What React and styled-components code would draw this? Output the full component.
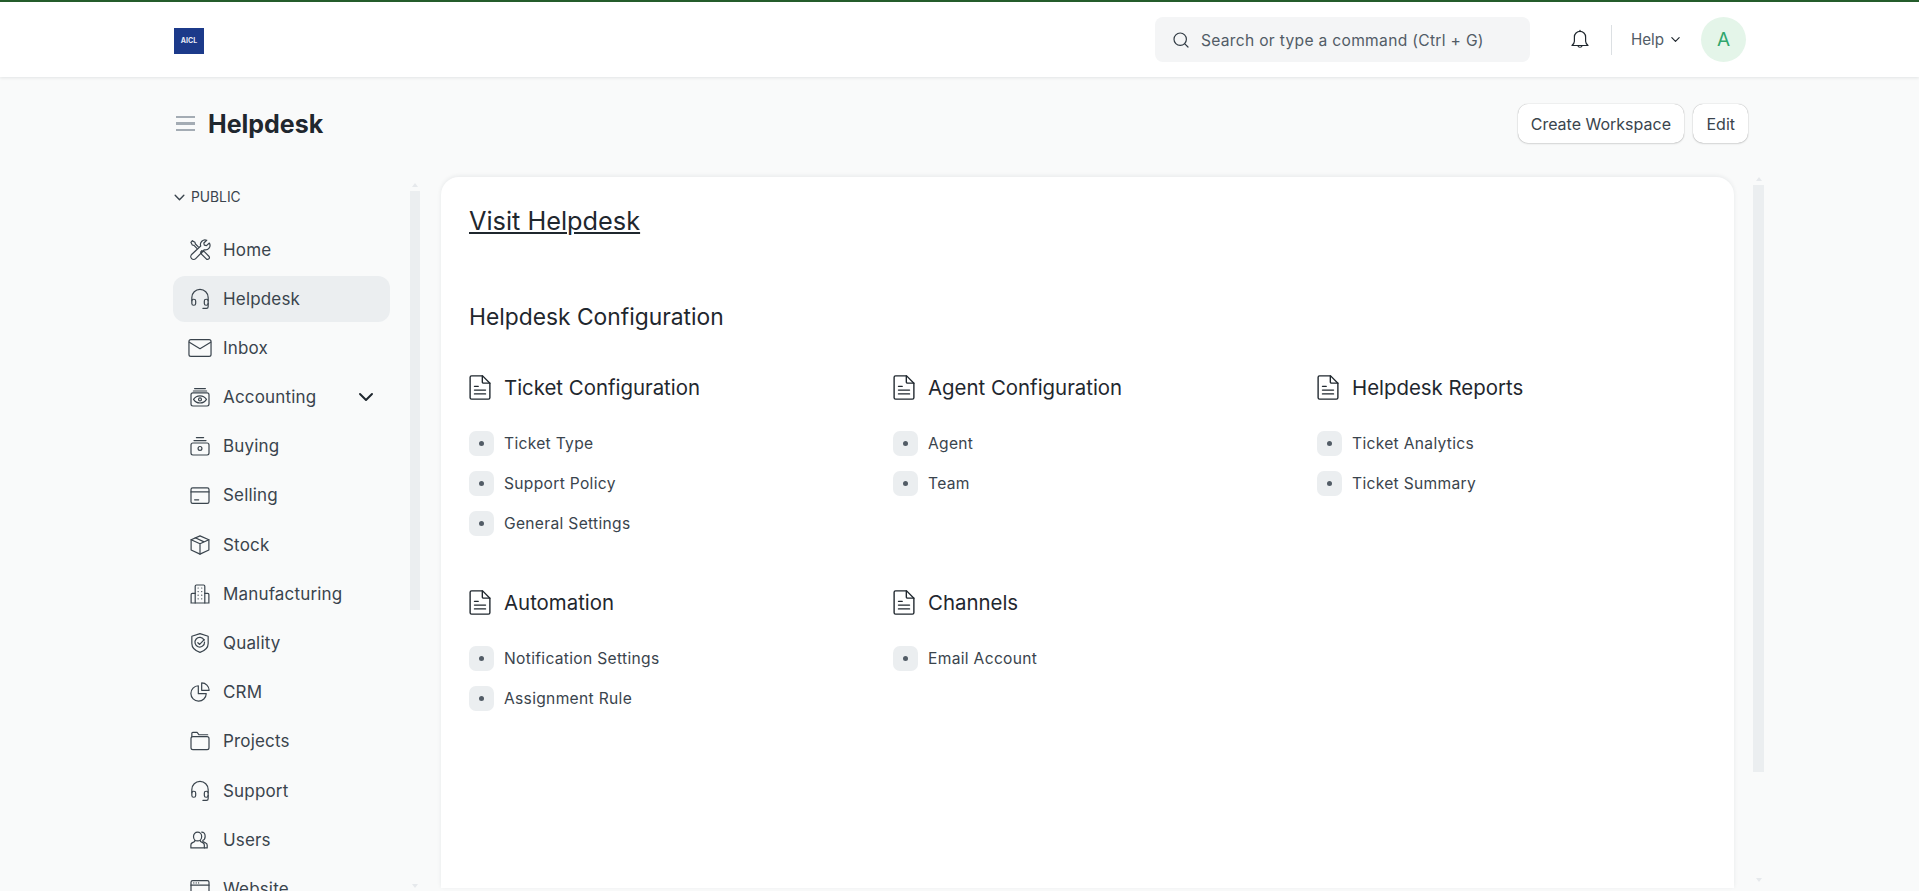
import React from "react";
import styled, { createGlobalStyle } from "styled-components";

const GlobalStyle = createGlobalStyle`
	html, body {
		margin: 0;
		height: 100%;
		overflow: hidden;
		background: #f9fafa;
		font-family: Inter, "Noto Sans", sans-serif;
		color: #1f272e;
	}
	* {
		box-sizing: border-box;
	}
`;

const Line = ({ size = 24, children }) => (
	<svg
		width={size}
		height={size}
		viewBox="0 0 20 20"
		fill="none"
		stroke="currentColor"
		strokeWidth="1"
		strokeLinecap="round"
		strokeLinejoin="round"
	>
		{children}
	</svg>
);

const icons = {
	tool: (
		<>
			<path d="M3.6 2.4 2.4 3.6l1.2 2.2 1.4.4 2.4 2.4" />
			<path d="M3.6 2.4l2.2 1.2.4 1.4 2.4 2.4" />
			<path d="M11.4 10.6l1 1M10.4 11.6l1 1" />
			<path d="M13.6 11.4l4 4a1.6 1.6 0 0 1-2.2 2.2l-4-4a1.5 1.5 0 0 1 2.2-2.2z" />
			<path d="M17.8 4.2 15.4 6.4 13.6 6l-.4-1.8 2.4-2.3a3.8 3.8 0 0 0-5 4.8L3 13.8a2.4 2.4 0 0 0 3.4 3.4l7.2-7.4a3.8 3.8 0 0 0 4.2-5.6z" />
		</>
	),
	headset: (
		<>
			<path d="M3.2 11.4V8.8a6.8 6.8 0 0 1 13.6 0v2.6" />
			<rect x="3.2" y="10.2" width="3.2" height="5" rx="1.5" />
			<rect x="13.6" y="10.2" width="3.2" height="5" rx="1.5" />
			<path d="M16.8 13.6v2.8a1.4 1.4 0 0 1-1.4 1.4h-3" />
		</>
	),
	inbox: (
		<>
			<rect x="0.8" y="3" width="18.4" height="14" rx="1.6" />
			<path d="M1.1 5.2 10 10.6l8.9-5.4" />
		</>
	),
	accounting: (
		<>
			<path d="M5.5 3h9M4.5 5h11" />
			<rect x="2.5" y="6.5" width="15" height="11" rx="1.6" />
			<path d="M4.6 12c1.3-2 3.3-3 5.4-3s4.1 1 5.4 3c-1.3 2-3.3 3-5.4 3s-4.1-1-5.4-3z" />
			<circle cx="10" cy="12" r="1.2" />
		</>
	),
	buying: (
		<>
			<path d="M7 3h6M5 5.5h10" />
			<rect x="2.5" y="7.5" width="15" height="10" rx="1.6" />
			<circle cx="10" cy="12" r="1.6" />
		</>
	),
	selling: (
		<>
			<rect x="2.5" y="4" width="15" height="13" rx="1.4" />
			<path d="M2.5 7.4h15M5.5 14h3.4" />
		</>
	),
	stock: (
		<>
			<path d="M10 2.4 17.4 5.6v8.6L10 17.6 2.6 14.2V5.6z" />
			<path d="M2.6 5.6 10 9l7.4-3.4M10 9v8.6M6 4l7.4 3.4" />
		</>
	),
	building: (
		<>
			<path d="M6 17.5V3.5a1 1 0 0 1 1-1h6a1 1 0 0 1 1 1v14" />
			<path d="M6 9.5H3.6a1 1 0 0 0-1 1v7M14 9.5h2.4a1 1 0 0 1 1 1v7M2.5 17.5h15" />
			<path d="M8.4 5h.1M11.4 5h.1M8.4 8h.1M11.4 8h.1M8.4 11h.1M11.4 11h.1M8.4 14h.1M11.4 14h.1" />
		</>
	),
	quality: (
		<>
			<path d="M10 2.2 16.8 4.4v6c0 3.4-2.6 6-6.8 7.4-4.2-1.4-6.8-4-6.8-7.4v-6z" />
			<path d="M13.4 7.6a4 4 0 1 0 .4 1.6" />
			<path d="M8.2 9.8l1.5 1.4 3.8-4" />
		</>
	),
	crm: (
		<>
			<path d="M8.6 4.8a6.4 6.4 0 1 0 6.6 6.6H8.6z" />
			<path d="M11.4 2.4v6.2h6.2a6.2 6.2 0 0 0-6.2-6.2z" />
		</>
	),
	folder: (
		<>
			<path d="M3.2 6.4V3.6a.8.8 0 0 1 .8-.8h3.6l1.6 2h7.2" />
			<rect x="2.5" y="6.4" width="15" height="10.8" rx="1.6" />
		</>
	),
	users: (
		<>
			<path d="M8 3.4c-1.9 0-3.4 1.5-3.4 3.6S6 10.8 8 10.8 11.4 9 11.4 7 9.9 3.4 8 3.4z" />
			<path d="M5.6 10.4v.8l-2.2 1.2a2 2 0 0 0-1 1.7v2.5h11.2v-2.5a2 2 0 0 0-1-1.7l-2.2-1.2v-.8" />
			<path d="M11.4 3.4c1.6 0 2.9 1.5 2.9 3.4s-.8 3-1.9 3.4v1l2.4 1.3a2 2 0 0 1 1.2 1.8v2.3h-2.2" />
		</>
	),
	website: (
		<>
			<rect x="2.5" y="3" width="15" height="14" rx="1.4" />
			<path d="M2.5 6.8h15M4.8 4.9h.1M6.8 4.9h.1M8.8 4.9h.1" />
		</>
	),
};

const menu = [
	{ label: "Home", icon: "tool" },
	{ label: "Helpdesk", icon: "headset", active: true },
	{ label: "Inbox", icon: "inbox" },
	{ label: "Accounting", icon: "accounting", expandable: true },
	{ label: "Buying", icon: "buying" },
	{ label: "Selling", icon: "selling" },
	{ label: "Stock", icon: "stock" },
	{ label: "Manufacturing", icon: "building" },
	{ label: "Quality", icon: "quality" },
	{ label: "CRM", icon: "crm" },
	{ label: "Projects", icon: "folder" },
	{ label: "Support", icon: "headset" },
	{ label: "Users", icon: "users" },
	{ label: "Website", icon: "website" },
];

const cards = [
	{
		title: "Ticket Configuration",
		links: ["Ticket Type", "Support Policy", "General Settings"],
	},
	{ title: "Agent Configuration", links: ["Agent", "Team"] },
	{ title: "Helpdesk Reports", links: ["Ticket Analytics", "Ticket Summary"] },
	{ title: "Automation", links: ["Notification Settings", "Assignment Rule"] },
	{ title: "Channels", links: ["Email Account"] },
];

const DocIcon = () => (
	<svg width="22" height="25" viewBox="2.6 1.4 14.8 17.2" fill="none" stroke="currentColor" strokeWidth="0.95" strokeLinecap="round" strokeLinejoin="round">
		<path d="M4.2 2h7.6l5 5v10a1 1 0 0 1-1 1H4.2a1 1 0 0 1-1-1V3a1 1 0 0 1 1-1z" />
		<path d="M11.6 2v4.2a.8.8 0 0 0 .8.8h4.4M6.2 9.2h2.6M6.2 11.8h7.6M6.2 14.4h7.6" />
	</svg>
);

const Chevron = ({ size = 12 }) => (
	<svg width={size} height={size} viewBox="0 0 12 12" fill="none" stroke="currentColor" strokeWidth="1.3" strokeLinecap="round" strokeLinejoin="round">
		<path d="M2 4l4 4 4-4" />
	</svg>
);

const App = () => (
	<Page>
		<GlobalStyle />
		<Navbar>
			<Logo>AICL</Logo>
			<NavRight>
				<SearchBox>
					<svg width="18" height="18" viewBox="0 0 18 18" fill="none" stroke="#313b44" strokeWidth="1.2" strokeLinecap="round">
						<circle cx="8.2" cy="8.2" r="6.2" />
						<path d="M12.8 12.8l3.2 3.2" />
					</svg>
					<span>Search or type a command (Ctrl + G)</span>
				</SearchBox>
				<Bell>
					<svg width="24" height="24" viewBox="0 0 24 24" fill="none" stroke="#1f272e" strokeWidth="1.2" strokeLinecap="round" strokeLinejoin="round">
						<path d="M12 3.4a5.6 5.6 0 0 0-5.6 5.6v4.2c0 1.7-1 3-2.4 4.3h16c-1.4-1.3-2.4-2.6-2.4-4.3V9A5.6 5.6 0 0 0 12 3.4z" />
						<path d="M9.8 17.6a2.3 2.3 0 0 0 4.4 0M12 2.4v1" />
					</svg>
				</Bell>
				<NavDivider />
				<Help>
					Help <Chevron size={11} />
				</Help>
				<Avatar>A</Avatar>
			</NavRight>
		</Navbar>

		<PageHead>
			<TitleGroup>
				<Burger>
					<span />
					<span />
					<span />
				</Burger>
				<Title>Helpdesk</Title>
			</TitleGroup>
			<Actions>
				<Button>Create Workspace</Button>
				<Button>Edit</Button>
			</Actions>
		</PageHead>

		<Body>
			<Sidebar>
				<SectionLabel>
					<Chevron size={13} />
					PUBLIC
				</SectionLabel>
				<Menu>
					{menu.map((item) => (
						<MenuItem key={item.label} $active={item.active}>
							<Line>{icons[item.icon]}</Line>
							<span>{item.label}</span>
							{item.expandable && (
								<Expander>
									<Chevron size={18} />
								</Expander>
							)}
						</MenuItem>
					))}
				</Menu>
			</Sidebar>
			<ScrollRail>
				<ArrowUp />
				<Thumb $height={419} />
				<ArrowDown />
			</ScrollRail>

			<Card>
				<VisitLink>Visit Helpdesk</VisitLink>
				<SectionTitle>Helpdesk Configuration</SectionTitle>
				<LinkGrid>
					{cards.map((card) => (
						<LinkCard key={card.title}>
							<CardHead>
								<DocIcon />
								<span>{card.title}</span>
							</CardHead>
							<LinkList>
								{card.links.map((link) => (
									<LinkRow key={link}>
										<Dot />
										<span>{link}</span>
									</LinkRow>
								))}
							</LinkList>
						</LinkCard>
					))}
				</LinkGrid>
			</Card>
			<ScrollRail $main>
				<ArrowUp />
				<Thumb $height={587} />
				<ArrowDown />
			</ScrollRail>
		</Body>
	</Page>
);

export default App;

const Page = styled.div`
	display: flex;
	flex-direction: column;
	height: 100vh;
	overflow: hidden;
`;

const Navbar = styled.header`
	display: flex;
	flex: none;
	align-items: center;
	justify-content: space-between;
	height: 77px;
	padding: 0 173px 0 174px;
	background: #fff;
	border-top: 2px solid #245c2b;
	box-shadow: 0 1px 3px rgba(25, 39, 52, 0.1);
`;

const Logo = styled.div`
	display: flex;
	align-items: center;
	justify-content: center;
	width: 30px;
	height: 26px;
	margin-top: 3px;
	padding-bottom: 2px;
	background: #1c3a8a;
	color: #e8ecf6;
	font-size: 7px;
	font-weight: 700;
`;

const NavRight = styled.div`
	display: flex;
	align-items: center;
`;

const SearchBox = styled.div`
	display: flex;
	align-items: center;
	gap: 11px;
	width: 375px;
	height: 45px;
	padding: 1px 0 0 17px;
	background: #f4f5f6;
	border-radius: 8px;
	color: #525c66;
	font-size: 15.6px;
	letter-spacing: 0.02em;
`;

const Bell = styled.div`
	display: flex;
	margin-left: 38px;
`;

const NavDivider = styled.div`
	width: 1px;
	height: 30px;
	margin: 0 19px;
	background: #dce0e3;
`;

const Help = styled.div`
	display: flex;
	align-items: center;
	gap: 6px;
	color: #525c66;
	font-size: 15.2px;
	svg {
		color: #1f272e;
	}
`;

const Avatar = styled.div`
	display: flex;
	align-items: center;
	justify-content: center;
	width: 45px;
	height: 45px;
	margin-left: 20px;
	background: #e4f5e9;
	border-radius: 50%;
	color: #30a66d;
	font-size: 19px;
`;

const PageHead = styled.div`
	display: flex;
	flex: none;
	align-items: center;
	justify-content: space-between;
	height: 100px;
	padding: 0 171px 7px 176px;
`;

const TitleGroup = styled.div`
	display: flex;
	align-items: center;
	gap: 13px;
`;

const Burger = styled.div`
	display: flex;
	flex-direction: column;
	gap: 4px;
	width: 19px;

	span {
		height: 2.4px;
		background: #a4acb4;
	}
`;

const Title = styled.h1`
	margin: 0;
	font-size: 25px;
	font-weight: 700;
	color: #1f272e;
`;

const Actions = styled.div`
	display: flex;
	gap: 9.5px;
`;

const Button = styled.button`
	height: 39px;
	padding: 0 13px;
	background: #fff;
	border: 0;
	border-radius: 10px;
	box-shadow: 0 0 1px rgba(0, 0, 0, 0.4), 0 1px 2px rgba(0, 0, 0, 0.12);
	color: #3a444d;
	font-family: inherit;
	font-size: 16px;
`;

const Body = styled.div`
	display: flex;
	flex: 1;
	min-height: 0;
	padding: 0 155px 3px 173px;
`;

const Sidebar = styled.aside`
	flex: none;
	width: 217px;
	overflow: hidden;
	margin-bottom: -3px;
`;

const SectionLabel = styled.div`
	display: flex;
	align-items: center;
	gap: 5px;
	height: 18px;
	margin-top: 11px;
	color: #3a444d;
	font-size: 13.8px;
`;

const Menu = styled.nav`
	display: flex;
	flex-direction: column;
	gap: 3.2px;
	margin-top: 20.5px;
`;

const MenuItem = styled.div`
	display: flex;
	flex: none;
	align-items: center;
	gap: 11px;
	height: 46px;
	padding-left: 15px;
	background: ${(p) => (p.$active ? "#ebeef0" : "transparent")};
	border-radius: 12px;
	color: #3a444d;
	font-size: 17px;
	letter-spacing: 0.01em;
`;

const Expander = styled.span`
	display: flex;
	margin-left: auto;
	margin-right: 15px;
	color: #1f272e;
`;

const ScrollRail = styled.div`
	display: flex;
	flex: none;
	flex-direction: column;
	align-items: center;
	width: ${(p) => (p.$main ? "11px" : "10px")};
	margin: 0 ${(p) => (p.$main ? "0" : "21px")} 0 ${(p) => (p.$main ? "19px" : "20px")};
	padding: ${(p) => (p.$main ? "0 0 6px" : "6px 0 0")};
`;

const ArrowUp = styled.div`
	flex: none;
	width: 0;
	height: 0;
	margin-bottom: 4px;
	border-left: 3.5px solid transparent;
	border-right: 3.5px solid transparent;
	border-bottom: 4px solid #e6e9ec;
`;

const ArrowDown = styled.div`
	flex: none;
	width: 0;
	height: 0;
	margin-top: auto;
	border-left: 3.5px solid transparent;
	border-right: 3.5px solid transparent;
	border-top: 4px solid #e6e9ec;
`;

const Thumb = styled.div`
	flex: none;
	width: 100%;
	height: ${(p) => p.$height}px;
	background: #ebeef0;
`;

const Card = styled.main`
	flex: none;
	width: 1293px;
	padding: 28px 28px 0;
	background: #fff;
	border-radius: 18px 18px 0 0;
	box-shadow: 0 -1px 4px rgba(25, 39, 52, 0.08);
`;

const VisitLink = styled.a`
	display: block;
	width: fit-content;
	font-size: 25.3px;
	line-height: 32px;
	color: #1f272e;
	text-decoration: underline;
`;

const SectionTitle = styled.h2`
	margin: 63.5px 0 0;
	font-size: 22.8px;
	font-weight: 400;
	line-height: 32px;
	color: #1f272e;
`;

const LinkGrid = styled.div`
	display: grid;
	grid-template-columns: repeat(3, 424px);
	grid-auto-rows: 215px;
	margin-top: 42px;
`;

const LinkCard = styled.section`
	display: flex;
	flex-direction: column;
`;

const CardHead = styled.div`
	display: flex;
	align-items: center;
	gap: 13px;
	height: 26px;
	font-size: 20.4px;
	font-weight: 400;
	color: #1f272e;
`;

const LinkList = styled.div`
	display: flex;
	flex-direction: column;
	gap: 15px;
	margin-top: 30px;
`;

const LinkRow = styled.div`
	display: flex;
	align-items: center;
	gap: 10px;
	height: 25px;
	color: #3a444d;
	font-size: 15.6px;
	letter-spacing: 0.02em;
`;

const Dot = styled.span`
	position: relative;
	flex: none;
	width: 25px;
	height: 25px;
	background: #ebeef0;
	border-radius: 7px;

	&::after {
		content: "";
		position: absolute;
		top: 10px;
		left: 10px;
		width: 5px;
		height: 5px;
		background: #525c66;
		border-radius: 50%;
	}
`;
